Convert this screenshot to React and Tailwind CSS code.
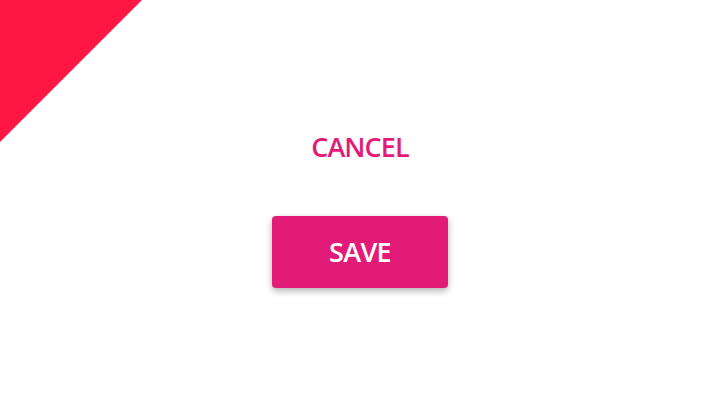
export default function App() {
  return (
    <div className="relative w-[720px] h-[400px] bg-white overflow-hidden" style={{ fontFamily: '"Open Sans", sans-serif' }}>
      <svg className="absolute left-0 top-0" width="142" height="142" viewBox="0 0 142 142">
        <polygon points="0,0 142,0 0,142" fill="#ff1744" />
      </svg>
      <div className="flex flex-col items-center pt-[130px]">
        <button className="h-[32px] flex items-center text-[27px] font-semibold text-[#e31b78] tracking-[-0.9px] leading-none">
          CANCEL
        </button>
        <button className="mt-[54px] w-[176px] h-[72px] pb-[2px] rounded-[4px] bg-[#e31b78] text-white text-[27px] font-semibold leading-none tracking-[-0.6px] shadow-[0_3px_7px_rgba(0,0,0,0.3)] flex items-center justify-center">
          SAVE
        </button>
      </div>
    </div>
  );
}
